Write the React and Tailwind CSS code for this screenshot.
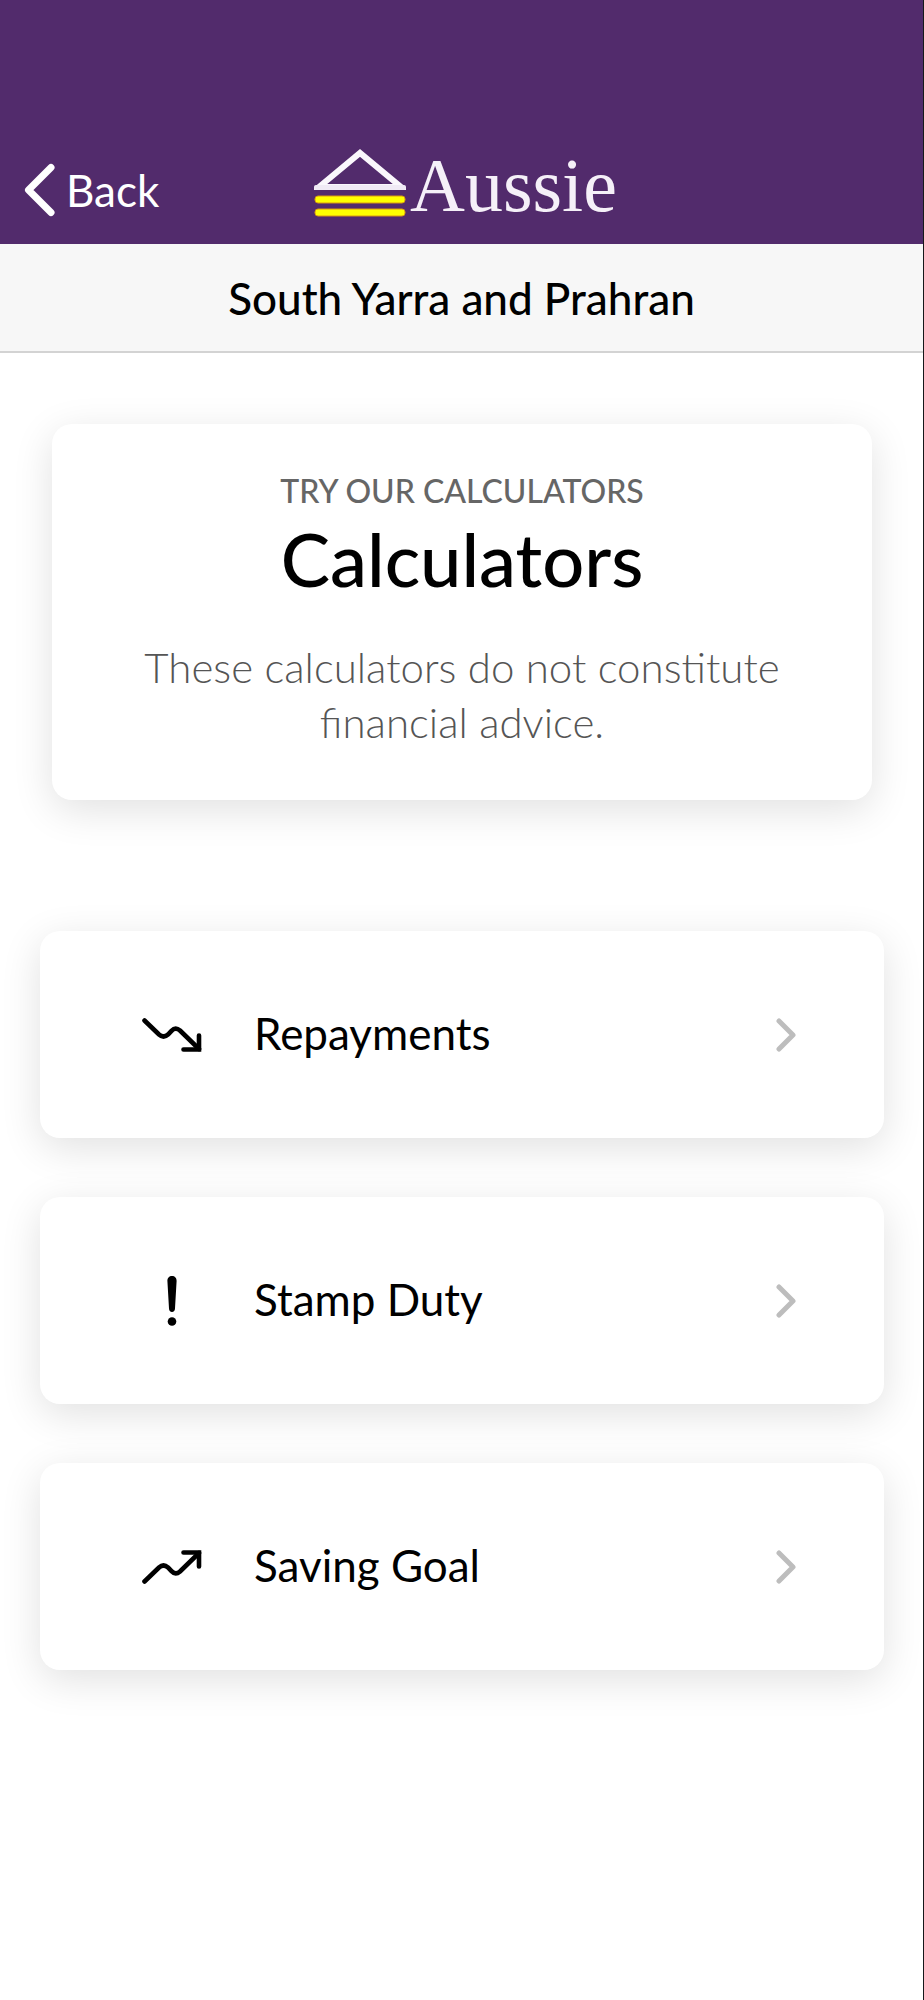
import React from 'react';

const TrendingDown = () => (
  <svg viewBox="0 0 60 34" className="w-[60px] h-[34px]" fill="none" stroke="black" strokeWidth="4.600" strokeLinecap="round" strokeLinejoin="miter">
    <path d="M2.500 2.500L17 16.500Q21.500 20.500 26 16.500L29.500 12.800Q33.500 8.500 38 12.500L57 31" />
    <path d="M41.500 31.500H57V17.500" />
  </svg>
);

const TrendingUp = () => (
  <svg viewBox="0 0 60 34" className="w-[60px] h-[34px]" fill="none" stroke="black" strokeWidth="4.600" strokeLinecap="round" strokeLinejoin="miter">
    <path d="M2.500 31.500L17 17.500Q21.500 13.500 26 17.500L29.500 21.200Q33.500 25.500 38 21.500L57 3" />
    <path d="M41.500 2.500H57V16.500" />
  </svg>
);

const Exclamation = () => (
  <svg viewBox="0 0 10 50" className="w-[10px] h-[50px]" fill="black">
    <path d="M5 0C7.800 0 9.700 2 9.600 5L8 32.500C7.900 34.600 6.800 36 5 36S2.100 34.600 2 32.500L0.400 5C0.300 2 2.200 0 5 0Z" />
    <circle cx="5" cy="45.500" r="4.300" />
  </svg>
);

const ChevronRight = () => (
  <svg viewBox="0 0 20 34" className="w-5 h-[34px] shrink-0" fill="none" stroke="#bdbdbd" strokeWidth="5" strokeLinecap="round" strokeLinejoin="round">
    <path d="M3 3L17 17L3 31" />
  </svg>
);

const Logo = () => (
  <div className="flex items-center">
    <svg viewBox="0 0 92 70" className="w-[92px] h-[70px]" fill="none">
      <path d="M5 39L46 5L87 39Z" stroke="#faf7fc" strokeWidth="6" />
      <rect x="0" y="37" width="92" height="5" rx="2" fill="#f0eaf5" />
      <rect x="1" y="48" width="90" height="7" rx="3" fill="#ffff00" stroke="#d99a10" />
      <rect x="1" y="61" width="90" height="7" rx="3" fill="#ffff00" stroke="#d99a10" />
    </svg>
    <span className="font-['Liberation_Serif',serif] text-[76px] leading-[70px] pl-1 pt-1 text-[#f5f0f8]">Aussie</span>
  </div>
);

const calculators = [
  { name: 'Repayments', icon: TrendingDown },
  { name: 'Stamp Duty', icon: Exclamation },
  { name: 'Saving Goal', icon: TrendingUp }
];

const App = () => {
  return (
    <div className="min-h-screen bg-white border-r border-[#16181a] font-['Lato',sans-serif] text-black">
      <header className="bg-[#522b6c] h-[244px] pt-[138px] pl-6 pr-4 grid grid-cols-[1fr_auto_1fr] items-start">
        <button type="button" className="flex items-center gap-2.5 h-[104px] text-white text-[44px] justify-self-start">
          <svg viewBox="0 0 32 54" className="w-8 h-[54px]" fill="none" stroke="white" strokeWidth="7" strokeLinecap="round" strokeLinejoin="round">
            <path d="M27 4.500L4.500 27L27 49.500" />
          </svg>
          Back
        </button>
        <div className="pt-2">
          <Logo />
        </div>
      </header>

      <div className="h-[109px] bg-[#f7f7f7] border-b-2 border-[#d3d3d3] flex items-center justify-center">
        <h1 className="text-[44px] font-medium">South Yarra and Prahran</h1>
      </div>

      <main>
        <section className="ml-[52px] mr-[51px] mt-[71px] px-20 pt-12 pb-[50px] rounded-[20px] bg-white shadow-[0_10px_40px_rgba(0,0,0,0.12)] text-center">
          <p className="text-[32px] leading-[38px] font-medium text-[#666666]">TRY OUR CALCULATORS</p>
          <h2 className="text-[74px] leading-[98px] font-medium">Calculators</h2>
          <p className="mt-8 text-[42px] leading-[55px] font-light text-[#555555]">
            These calculators do not constitute financial advice.
          </p>
        </section>

        <nav className="mt-[131px] ml-10 mr-[39px] flex flex-col gap-[59px]">
          {calculators.map(({ name, icon: Icon }) => (
            <a
              key={name}
              href="#"
              className="flex items-center h-[207px] pl-[102px] pr-[88px] rounded-[20px] bg-white shadow-[0_10px_40px_rgba(0,0,0,0.12)]"
            >
              <span className="w-[60px] flex justify-center">
                <Icon />
              </span>
              <span className="flex-1 pl-[52px] pb-1 text-[44px]">{name}</span>
              <ChevronRight />
            </a>
          ))}
        </nav>
      </main>
    </div>
  );
};

export default App;
